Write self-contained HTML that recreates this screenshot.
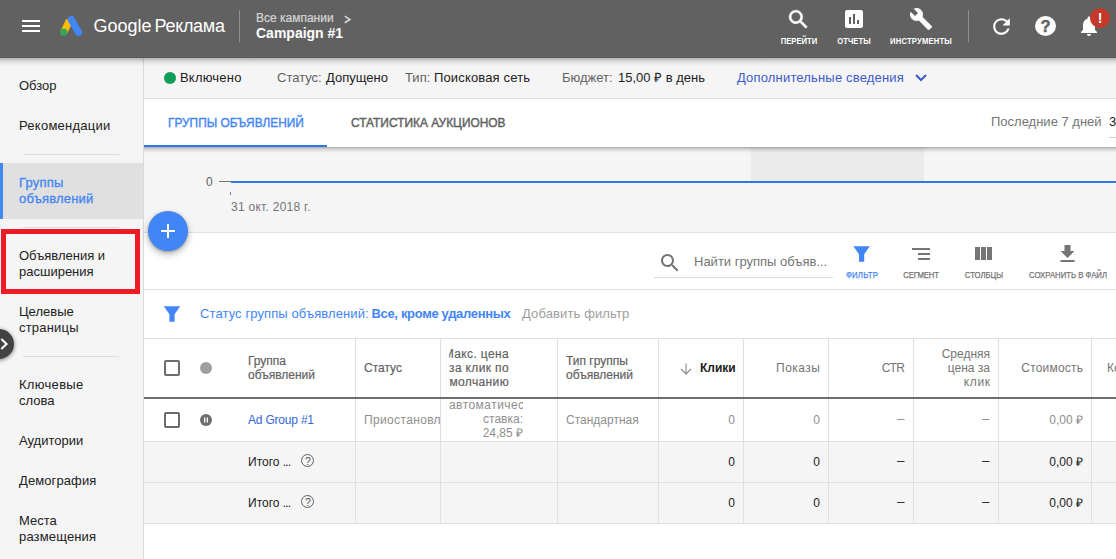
<!DOCTYPE html>
<html lang="ru">
<head>
<meta charset="utf-8">
<title>Google Реклама</title>
<style>
html,body{margin:0;padding:0;}
body{width:1116px;height:559px;overflow:hidden;position:relative;background:#fff;
  font-family:"Liberation Sans",sans-serif;font-size:13px;color:#212121;}
.a{position:absolute;}
.t{position:absolute;white-space:nowrap;line-height:16px;}
.med{-webkit-text-stroke:0.3px currentColor;}
.hc.med{-webkit-text-stroke:0.18px currentColor;}
/* header */
#hdr{left:0;top:0;width:1116px;height:57px;background:#616161;z-index:10;}
#hdr:after{content:"";position:absolute;left:0;top:57px;width:1116px;height:9px;background:linear-gradient(to bottom,#5b5b5b 0,#5b5b5b 1px,rgba(0,0,0,.29) 1px,rgba(0,0,0,.2) 2.5px,rgba(0,0,0,.11) 4.5px,rgba(0,0,0,.045) 6.5px,rgba(0,0,0,0) 9px);}
#hdr .lbl{position:absolute;color:#fff;font-weight:bold;font-size:8.6px;line-height:10px;white-space:nowrap;transform:translateX(-50%) scaleX(.89);}
/* sidebar */
#side{left:0;top:57px;width:143px;height:502px;background:#f5f5f5;border-right:1px solid #dadada;}
#side .it{position:absolute;left:19px;line-height:16px;font-size:13px;color:#212121;}
#side .dv{position:absolute;left:23px;width:96px;height:1px;background:#dcdcdc;}
/* main */
.hl{position:absolute;left:144px;width:972px;height:1px;background:#e0e0e0;}
.vl{position:absolute;top:339px;width:1px;height:184px;background:#e0e0e0;}
.hc{position:absolute;font-size:12px;line-height:14px;color:#616161;}
.hr{position:absolute;font-size:12px;line-height:14px;color:#757575;text-align:right;}
.c{position:absolute;font-size:12px;line-height:14px;color:#8e8e8e;white-space:nowrap;}
.r{text-align:right;}
.tl{position:absolute;font-size:8.6px;line-height:10px;color:#757575;white-space:nowrap;transform:translateX(-50%) scaleX(.9);-webkit-text-stroke:0.25px currentColor;}
</style>
</head>
<body>

<!-- ============ SIDEBAR ============ -->
<div id="side" class="a">
  <div class="it" style="top:21px">Обзор</div>
  <div class="it" style="top:61px;letter-spacing:.25px">Рекомендации</div>
  <div class="dv" style="top:97px"></div>
  <div class="a" style="left:0;top:106px;width:143px;height:56px;background:#e0e0e0;"></div>
  <div class="a" style="left:0;top:106px;width:3px;height:56px;background:#4285f4;"></div>
  <div class="it med" style="top:118px;color:#4285f4;letter-spacing:.2px">Группы<br>объявлений</div>
  <div class="dv" style="top:170px"></div>
  <div class="it" style="top:191px">Объявления и<br>расширения</div>
  <div class="a" style="left:1px;top:172px;width:129px;height:55px;border:5px solid #ed1c24;"></div>
  <div class="it" style="top:247px">Целевые<br><span style="letter-spacing:.2px">страницы</span></div>
  <div class="dv" style="top:299px"></div>
  <div class="it" style="top:320px"><span style="letter-spacing:.3px">Ключевые</span><br>слова</div>
  <div class="it" style="top:376px">Аудитории</div>
  <div class="it" style="top:416px;letter-spacing:.1px">Демография</div>
  <div class="it" style="top:456px">Места<br><span style="letter-spacing:.15px">размещения</span></div>
</div>

<!-- ============ STATUS BAR ============ -->
<div class="a" style="left:144px;top:57px;width:972px;height:41px;background:#f5f5f5;"></div>
<div class="hl" style="top:98px"></div>
<div class="a" style="left:164px;top:72px;width:12px;height:12px;border-radius:50%;background:#0f9d58;"></div>
<div class="t" style="left:180px;top:70px;letter-spacing:.2px">Включено</div>
<div class="t" style="left:277px;top:70px;color:#616161">Статус:</div>
<div class="t" style="left:326px;top:70px;">Допущено</div>
<div class="t" style="left:405px;top:70px;color:#616161">Тип:</div>
<div class="t" style="left:434px;top:70px;letter-spacing:.15px">Поисковая сеть</div>
<div class="t" style="left:562px;top:70px;color:#616161">Бюджет:</div>
<div class="t" style="left:618px;top:70px;">15,00 ₽ в день</div>
<div class="t" style="left:737px;top:70px;color:#3c5bc9;letter-spacing:.17px">Дополнительные сведения</div>
<svg class="a" style="left:913px;top:70px" width="16" height="16" viewBox="0 0 16 16"><path d="M3 5 L8 10 L13 5" fill="none" stroke="#3c5bc9" stroke-width="2.1"/></svg>

<!-- ============ TABS ============ -->
<div class="a" style="left:144px;top:99px;width:972px;height:48px;background:#fff;z-index:3;"></div>
<div class="a" style="left:144px;top:147px;width:972px;height:6px;background:linear-gradient(to bottom,rgba(0,0,0,.32) 0,rgba(0,0,0,.18) 1.5px,rgba(0,0,0,.08) 3.5px,rgba(0,0,0,0) 6px);z-index:3;"></div>
<div class="a" style="left:144px;top:145px;width:183px;height:2px;background:#3275ec;z-index:4;"></div>
<div class="t med" style="left:168px;top:115px;color:#4285f4;z-index:4;transform:scaleX(.913);transform-origin:0 0;-webkit-text-stroke:.4px #4285f4">ГРУППЫ ОБЪЯВЛЕНИЙ</div>
<div class="t med" style="left:351px;top:115px;color:#616161;z-index:4;transform:scaleX(.916);transform-origin:0 0;-webkit-text-stroke:.45px #616161">СТАТИСТИКА АУКЦИОНОВ</div>
<div class="t" style="left:991px;top:114px;color:#757575;z-index:4;">Последние 7 дней</div>
<div class="t" style="left:1109px;top:114px;color:#212121;z-index:4;">31</div>
<div class="a" style="left:1109px;top:137px;width:7px;height:1px;background:#d0d0d0;z-index:4;"></div>

<!-- ============ CHART ============ -->
<div class="a" style="left:144px;top:147px;width:972px;height:85px;background:#f5f5f5;"></div>
<div class="a" style="left:751px;top:147px;width:173px;height:34px;background:#ebebeb;"></div>
<div class="hl" style="top:232px"></div>
<div class="t" style="left:206px;top:175px;font-size:12px;line-height:14px;color:#616161">0</div>
<div class="a" style="left:219px;top:181px;width:12px;height:1px;background:#757575;"></div>
<div class="a" style="left:231px;top:181px;width:885px;height:2px;background:#3275ec;"></div>
<div class="a" style="left:230px;top:192px;width:1px;height:3px;background:#757575;"></div>
<div class="t" style="left:231px;top:200px;font-size:12px;line-height:14px;color:#757575;letter-spacing:.27px">31 окт. 2018 г.</div>

<!-- FAB -->
<div class="a" style="left:148px;top:211px;width:40px;height:40px;border-radius:50%;background:#4285f4;box-shadow:0 3px 7px rgba(0,0,0,.3),0 1px 2px rgba(0,0,0,.2);z-index:5;"></div>
<div class="a" style="left:161px;top:230px;width:14px;height:2px;background:#fff;z-index:6;"></div>
<div class="a" style="left:167px;top:224px;width:2px;height:14px;background:#fff;z-index:6;"></div>

<!-- ============ TOOLBAR ============ -->
<div class="hl" style="top:289px"></div>
<svg class="a" style="left:658px;top:251px" width="24" height="24" viewBox="0 0 24 24"><path fill="#757575" d="M15.5 14h-.79l-.28-.27C15.41 12.59 16 11.11 16 9.5 16 5.91 13.09 3 9.5 3S3 5.91 3 9.5 5.91 16 9.5 16c1.61 0 3.09-.59 4.23-1.57l.27.28v.79l5 4.99L20.49 19l-4.99-5zm-6 0C7.01 14 5 11.99 5 9.5S7.01 5 9.5 5 14 7.01 14 9.5 11.99 14 9.5 14z"/></svg>
<div class="t" style="left:694px;top:254px;color:#757575;">Найти группы объяв...</div>
<div class="a" style="left:654px;top:277px;width:179px;height:1px;background:#dcdcdc;"></div>

<svg class="a" style="left:840px;top:240px" width="276" height="30" viewBox="840 240 276 30">
  <path fill="#4285f4" d="M853.3 246.2H869.8L864.2 254.2V261.7H859V254.2Z"/>
  <g fill="#757575">
    <rect x="912" y="248" width="18" height="2"/><rect x="918" y="253" width="12" height="2"/><rect x="918" y="258" width="12" height="2"/>
    <rect x="975" y="247" width="5" height="13"/><rect x="981" y="247" width="5" height="13"/><rect x="987" y="247" width="5" height="13"/>
    <path d="M1074.5 251h-4v-6h-6v6h-4l7 7 7-7zM1060.5 260v2h14v-2h-14z"/>
  </g>
</svg>
<div class="tl" style="left:861.6px;top:269.8px;color:#4285f4;letter-spacing:.25px">ФИЛЬТР</div>
<div class="tl" style="left:920.8px;top:269.8px;letter-spacing:-.2px">СЕГМЕНТ</div>
<div class="tl" style="left:983.5px;top:269.8px;">СТОЛБЦЫ</div>
<div class="tl" style="left:1067.8px;top:269.8px;">СОХРАНИТЬ В ФАЙЛ</div>

<!-- ============ FILTER BAR ============ -->
<div class="hl" style="top:338px"></div>
<svg class="a" style="left:160px;top:302px" width="24" height="24" viewBox="0 0 24 24"><path fill="#4285f4" d="M3.8 4.3H20.2L14.6 12.3V19.8H9.4V12.3Z"/></svg>
<div class="t" style="left:200px;top:306px;color:#4285f4;letter-spacing:.1px">Статус группы объявлений:</div>
<div class="t" style="left:371.5px;top:306px;color:#4285f4;font-weight:bold;letter-spacing:-.33px">Все, кроме удаленных</div>
<div class="t" style="left:522px;top:306px;color:#9e9e9e;letter-spacing:.12px">Добавить фильтр</div>

<!-- ============ TABLE ============ -->
<div class="a" style="left:144px;top:442px;width:972px;height:81px;background:#f5f5f5;"></div>
<div class="a" style="left:144px;top:397px;width:972px;height:2px;background:#6e6e6e;z-index:2;"></div>
<div class="hl" style="top:441px"></div>
<div class="hl" style="top:482px"></div>
<div class="hl" style="top:523px"></div>
<div class="vl" style="left:355px"></div><div class="vl" style="left:440px"></div><div class="vl" style="left:557px"></div>
<div class="vl" style="left:658px"></div><div class="vl" style="left:743px"></div><div class="vl" style="left:828px"></div>
<div class="vl" style="left:913px"></div><div class="vl" style="left:998px"></div><div class="vl" style="left:1091px"></div>

<!-- header cells -->
<div class="a" style="left:164px;top:360px;width:12px;height:12px;border:2px solid #6b6b6b;border-radius:2px;"></div>
<div class="a" style="left:200px;top:362px;width:12px;height:12px;border-radius:50%;background:#9e9e9e;"></div>
<div class="hc med" style="left:248px;top:354px;">Группа<br>объявлений</div>
<div class="hc med" style="left:364px;top:361px;">Статус</div>
<div class="a" style="left:449px;top:340px;width:60px;height:56px;overflow:hidden;">
  <div class="hc med" style="right:0;top:7px;text-align:right;white-space:nowrap;letter-spacing:.36px">Макс. цена<br>за клик по<br>умолчанию</div>
</div>
<div class="hc med" style="left:566px;top:354px;">Тип группы<br>объявлений</div>
<svg class="a" style="left:679px;top:362px" width="14" height="14" viewBox="0 0 14 14"><path d="M7 1.5V11.5M2 7L7 12L12 7" fill="none" stroke="#8a8a8a" stroke-width="1.1"/></svg>
<div class="hc" style="left:700px;top:361px;color:#212121;font-weight:bold;">Клики</div>
<div class="hr" style="right:295.5px;top:361px;letter-spacing:.5px">Показы</div>
<div class="hr" style="right:212px;top:361px;letter-spacing:-.8px">CTR</div>
<div class="hr" style="right:126px;top:347px;">Средняя<br>цена за<br><span style="letter-spacing:.6px;margin-right:-.6px">клик</span></div>
<div class="hr" style="right:32.8px;top:361px;letter-spacing:.2px">Стоимость</div>
<div class="hr" style="left:1107px;top:361px;white-space:nowrap;">Конверсии</div>

<!-- row 1 -->
<div class="a" style="left:164px;top:412px;width:12px;height:12px;border:2px solid #6b6b6b;border-radius:2px;"></div>
<svg class="a" style="left:200px;top:413.5px" width="12" height="12" viewBox="0 0 12 12"><circle cx="6" cy="6" r="6" fill="#6e6e6e"/><rect x="4" y="3.5" width="1.3" height="5" fill="#fff"/><rect x="6.7" y="3.5" width="1.3" height="5" fill="#fff"/></svg>
<div class="c" style="left:248px;top:413px;color:#3367d6;letter-spacing:-.2px">Ad Group #1</div>
<div class="a" style="left:364px;top:413px;width:76px;height:14px;overflow:hidden;"><div class="c" style="left:0;top:0;letter-spacing:.35px">Приостановлена</div></div>
<div class="a" style="left:449px;top:399px;width:74px;height:42px;overflow:hidden;">
  <div class="c r" style="left:0;top:-1px;width:74px;white-space:normal;"><span style="letter-spacing:.45px">автоматическая</span><br>ставка:<br>24,85 ₽</div>
</div>
<div class="c" style="left:566px;top:413px;">Стандартная</div>
<div class="c r" style="right:381px;top:413px;">0</div>
<div class="c r" style="right:296px;top:413px;">0</div>
<div class="c r" style="right:211.6px;top:412px;font-size:13.5px">–</div>
<div class="c r" style="right:126.6px;top:412px;font-size:13.5px">–</div>
<div class="c r" style="right:33px;top:413px;">0,00 ₽</div>

<!-- row 2 -->
<div class="c" style="left:248px;top:455px;color:#212121">Итого <span style="letter-spacing:-.9px">...</span></div>
<div class="a" style="left:301.2px;top:454.3px;width:11.2px;height:11.2px;border:1.2px solid #616161;border-radius:50%;"></div><div class="t" style="left:301.2px;top:454.3px;width:13.6px;text-align:center;font-size:10.5px;line-height:14px;color:#555;">?</div>
<div class="c r" style="right:381px;top:455px;color:#212121">0</div>
<div class="c r" style="right:296px;top:455px;color:#212121">0</div>
<div class="c r" style="right:211.6px;top:454px;color:#212121;font-size:13.5px">–</div>
<div class="c r" style="right:126.6px;top:454px;color:#212121;font-size:13.5px">–</div>
<div class="c r" style="right:33px;top:455px;color:#212121">0,00 ₽</div>

<!-- row 3 -->
<div class="c" style="left:248px;top:496px;color:#212121">Итого <span style="letter-spacing:-.9px">...</span></div>
<div class="a" style="left:301.2px;top:495.2px;width:11.2px;height:11.2px;border:1.2px solid #616161;border-radius:50%;"></div><div class="t" style="left:301.2px;top:495.2px;width:13.6px;text-align:center;font-size:10.5px;line-height:14px;color:#555;">?</div>
<div class="c r" style="right:381px;top:496px;color:#212121">0</div>
<div class="c r" style="right:296px;top:496px;color:#212121">0</div>
<div class="c r" style="right:211.6px;top:495px;color:#212121;font-size:13.5px">–</div>
<div class="c r" style="right:126.6px;top:495px;color:#212121;font-size:13.5px">–</div>
<div class="c r" style="right:33px;top:496px;color:#212121">0,00 ₽</div>

<!-- sidebar collapse handle -->
<div class="a" style="left:-16px;top:329px;width:30px;height:30px;border-radius:50%;background:#424242;box-shadow:0 1px 4px rgba(0,0,0,.5);z-index:8;"></div>
<svg class="a" style="left:0;top:337.3px;z-index:9" width="12" height="14" viewBox="0 0 12 14"><path d="M1.3 2L6.6 7L1.3 12" fill="none" stroke="#fff" stroke-width="2"/></svg>

<!-- ============ HEADER ============ -->
<div id="hdr" class="a">
  <div class="a" style="left:21.5px;top:20px;width:18.9px;height:2.1px;background:#fff"></div><div class="a" style="left:21.5px;top:25px;width:18.9px;height:2.1px;background:#fff"></div><div class="a" style="left:21.5px;top:30px;width:18.9px;height:2.1px;background:#fff"></div>
  <svg class="a" style="left:58px;top:13px" width="28" height="26" viewBox="58 13 28 26">
    <path d="M69.6 20.2L63.8 32.2" stroke="#fbbc04" stroke-width="7.2" fill="none"/>
    <path d="M71.3 19.4L78.6 32.4" stroke="#4285f4" stroke-width="7.2" stroke-linecap="round" fill="none"/>
    <circle cx="63.8" cy="32.2" r="3.6" fill="#34a853"/>
  </svg>
  <div class="t" style="left:93.4px;top:14px;font-size:18px;line-height:24px;color:#fff;">Google</div>
  <div class="t" style="left:154.5px;top:14px;font-size:18px;line-height:24px;color:#fff;letter-spacing:-.3px">Реклама</div>
  <div class="a" style="left:239px;top:10px;width:1px;height:32px;background:#8e8e8e;"></div>
  <div class="t" style="left:256px;top:11px;font-size:12px;line-height:14px;color:#d6d6d6;-webkit-text-stroke:.2px #d6d6d6">Все кампании</div>
  <svg class="a" style="left:343px;top:14px" width="10" height="10" viewBox="0 0 10 10"><path d="M1.8 2.1L6.8 5.4L1.8 8.7" fill="none" stroke="#d6d6d6" stroke-width="1.7"/></svg>
  <div class="t" style="left:256px;top:25px;font-size:14px;line-height:16px;color:#fff;font-weight:bold;">Campaign #1</div>

  <svg class="a" style="left:785.8px;top:6.9px" width="25" height="25" viewBox="0 0 24 24"><path fill="#fff" stroke="#fff" stroke-width=".5" d="M15.5 14h-.79l-.28-.27C15.41 12.59 16 11.11 16 9.5 16 5.91 13.09 3 9.5 3S3 5.91 3 9.5 5.91 16 9.5 16c1.61 0 3.09-.59 4.23-1.57l.27.28v.79l5 4.99L20.49 19l-4.99-5zm-6 0C7.01 14 5 11.99 5 9.5S7.01 5 9.5 5 14 7.01 14 9.5 11.99 14 9.5 14z"/></svg>
  <div class="lbl" style="left:798.6px;top:35.6px;">ПЕРЕЙТИ</div>
  <svg class="a" style="left:841.8px;top:7px" width="24" height="24" viewBox="0 0 24 24"><path fill="#fff" d="M19 3H5c-1.1 0-2 .9-2 2v14c0 1.1.9 2 2 2h14c1.1 0 2-.9 2-2V5c0-1.1-.9-2-2-2zM9 17H7v-7h2v7zm4 0h-2V7h2v10zm4 0h-2v-4h2v4z"/></svg>
  <div class="lbl" style="left:853.5px;top:35.6px;">ОТЧЕТЫ</div>
  <svg class="a" style="left:909.4px;top:7px" width="24" height="24" viewBox="0 0 24 24"><path fill="#fff" d="M22.7 19l-9.1-9.1c.9-2.3.4-5-1.5-6.9-2-2-5-2.4-7.4-1.3L9 6 6 9 1.6 4.7C.4 7.1.9 10.1 2.9 12.1c1.9 1.9 4.6 2.4 6.9 1.5l9.1 9.1c.4.4 1 .4 1.4 0l2.3-2.3c.5-.4.5-1.1.1-1.4z"/></svg>
  <div class="lbl" style="left:921px;top:35.6px;letter-spacing:.2px">ИНСТРУМЕНТЫ</div>
  <div class="a" style="left:968px;top:10px;width:1px;height:32px;background:#8e8e8e;"></div>
  <svg class="a" style="left:988.9px;top:13.5px" width="25" height="25" viewBox="0 0 24 24"><path fill="#fff" d="M17.65 6.35C16.2 4.9 14.21 4 12 4c-4.42 0-7.99 3.58-7.99 8s3.57 8 7.99 8c3.73 0 6.84-2.55 7.73-6h-2.08c-.82 2.33-3.04 4-5.65 4-3.31 0-6-2.69-6-6s2.69-6 6-6c1.66 0 3.14.69 4.22 1.78L13 11h7V4l-2.35 2.35z"/></svg>
  <div class="a" style="left:1035px;top:15.8px;width:21px;height:20px;border-radius:50%;background:#fff;"></div>
  <div class="t" style="left:1035px;top:16.3px;width:21px;text-align:center;font-size:16.5px;line-height:20px;font-weight:bold;color:#616161;-webkit-text-stroke:.4px #616161">?</div>
  <svg class="a" style="left:1076.6px;top:13.6px" width="24" height="24" viewBox="0 0 24 24"><path fill="#fff" d="M12 22c1.1 0 2-.9 2-2h-4c0 1.1.89 2 2 2zm6-6v-5c0-3.07-1.64-5.64-4.5-6.32V4c0-.83-.67-1.5-1.5-1.5s-1.5.67-1.5 1.5v.68C7.63 5.36 6 7.92 6 11v5l-2 2v1h16v-1l-2-2z"/></svg>
  <div class="a" style="left:1090px;top:8px;width:20px;height:20px;border-radius:50%;background:#c5392c;"></div>
  <div class="t" style="left:1090px;top:10px;width:20px;text-align:center;font-size:14px;line-height:16px;font-weight:bold;color:#fff;">!</div>
</div>

</body>
</html>
